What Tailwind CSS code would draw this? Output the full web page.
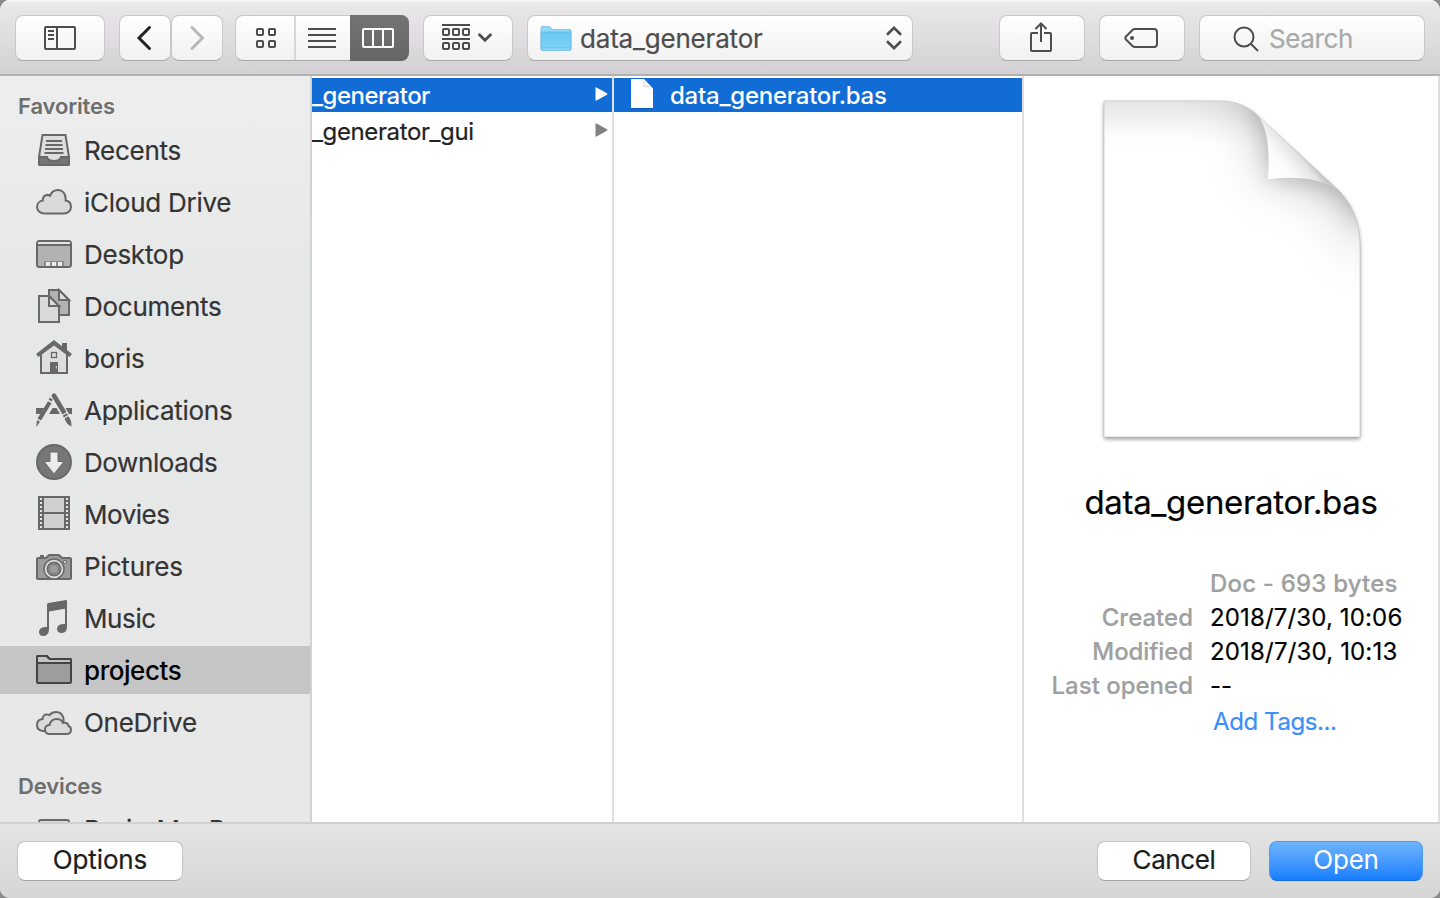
<!DOCTYPE html>
<html lang="en">
<head>
<meta charset="utf-8">
<title>Open</title>
<script src="https://cdn.jsdelivr.net/npm/@tailwindcss/browser@4"></script>
</head>
<body class="bg-[#8a8a8a] font-['Inter','Liberation_Sans',sans-serif]">
<div class="flex h-[898px] w-[1440px] flex-col overflow-hidden rounded-[10px] bg-white [-webkit-text-stroke:0.2px]">

  <!-- Toolbar -->
  <header class="flex h-[76px] shrink-0 items-start border-b-2 border-[#b3b0b3] bg-linear-to-b from-[#ebe9ec] to-[#d3d1d4] pl-[15px] pt-[15px] text-[#4d4d4d] shadow-[inset_0_2px_0_#f5f4f6]">
    <button class="flex h-[46px] w-[90px] items-center justify-center rounded-lg border border-[#c9c7c9] border-b-[#a9a7a9] bg-linear-to-b from-white to-[#f1f1f1]">
      <svg width="32" height="24" viewBox="0 0 32 24" fill="none" stroke="#4d4d4d" stroke-width="2"><rect x="1" y="1" width="30" height="22" rx="1"/><path d="M13 1v22M4 5h6M4 9h6M4 13h6"/></svg>
    </button>
    <button class="ml-[14px] flex h-[46px] w-[52px] items-center justify-center rounded-lg border border-[#c9c7c9] border-b-[#a9a7a9] bg-linear-to-b from-white to-[#f1f1f1]">
      <svg class="-translate-x-px" width="16" height="26" viewBox="0 0 16 26" fill="none" stroke="#222" stroke-width="3" stroke-linecap="round" stroke-linejoin="miter"><path d="M13.500 2.500L3 13l10.500 10.500"/></svg>
    </button>
    <button class="flex h-[46px] w-[52px] items-center justify-center rounded-lg border border-[#c9c7c9] border-b-[#a9a7a9] bg-linear-to-b from-white to-[#f1f1f1]">
      <svg width="16" height="26" viewBox="0 0 16 26" fill="none" stroke="#b8b8b8" stroke-width="3" stroke-linecap="round"><path d="M3 2.500L13.500 13L3 23.500"/></svg>
    </button>
    <div class="ml-3 flex h-[46px] w-[174px] rounded-lg border border-[#c9c7c9] border-b-[#a9a7a9] bg-linear-to-b from-white to-[#f1f1f1]">
      <div class="flex w-[60px] shrink-0 items-center justify-center border-r-2 border-[#d8d8d8]">
        <svg class="translate-x-px" width="20" height="20" viewBox="0 0 20 20" fill="none" stroke="#4d4d4d" stroke-width="2"><rect x="1" y="1" width="6" height="6" rx="1"/><rect x="13" y="1" width="6" height="6" rx="1"/><rect x="1" y="13" width="6" height="6" rx="1"/><rect x="13" y="13" width="6" height="6" rx="1"/></svg>
      </div>
      <div class="flex w-[54px] shrink-0 items-center justify-center">
        <svg class="-translate-x-px" width="28" height="20" viewBox="0 0 28 20" stroke="#4d4d4d" stroke-width="2"><path d="M0 1h28M0 7h28M0 13h28M0 19h28"/></svg>
      </div>
      <div class="-my-px flex w-[59px] shrink-0 items-center rounded-r-lg bg-linear-to-b from-[#737373] to-[#666] pl-3">
        <svg width="32" height="20" viewBox="0 0 32 20" fill="none" stroke="#fff" stroke-width="2"><rect x="1" y="1" width="30" height="18" rx="1"/><path d="M11 1v18M21 1v18"/></svg>
      </div>
    </div>
    <button class="ml-[14px] flex h-[46px] w-[90px] items-start gap-2 rounded-lg border border-[#c9c7c9] border-b-[#a9a7a9] bg-linear-to-b from-white to-[#f1f1f1] pl-[18px] pt-2">
      <svg width="28" height="26" viewBox="0 0 28 26" fill="none" stroke="#4d4d4d" stroke-width="2"><path d="M0 1h28M0 15h28"/><rect x="1" y="5" width="6" height="6" rx="1"/><rect x="11" y="5" width="6" height="6" rx="1"/><rect x="21" y="5" width="6" height="6" rx="1"/><rect x="1" y="19" width="6" height="6" rx="1"/><rect x="11" y="19" width="6" height="6" rx="1"/><rect x="21" y="19" width="6" height="6" rx="1"/></svg>
      <svg class="mt-[9px]" width="14" height="10" viewBox="0 0 14 10" fill="none" stroke="#4d4d4d" stroke-width="2.800" stroke-linecap="round"><path d="M1.500 1.800L7 7.300l5.500-5.500"/></svg>
    </button>
    <button class="ml-[14px] flex h-[46px] w-[386px] items-center rounded-lg border border-[#c9c7c9] border-b-[#a9a7a9] bg-linear-to-b from-white to-[#f1f1f1] pl-[12px] pr-[10px]">
      <svg class="translate-y-[0.500px]" width="32" height="26" viewBox="0 0 32 26">
        <defs><linearGradient id="fold" x2="0" y2="1"><stop offset="0" stop-color="#68c8f3"/><stop offset="1" stop-color="#82d3f7"/></linearGradient></defs>
        <path d="M1 24V2.200Q1 1 2.200 1h6.600q1 0 1.600.8l1.400 1.600q.5.600 1.400.6H30q1 0 1 1V24z" fill="#8fd8f8" stroke="#6cb6dc" stroke-width=".7"/>
        <path d="M1 6.500h30V24q0 1-1 1H2q-1 0-1-1z" fill="url(#fold)" stroke="#5fb2dc" stroke-width=".6"/><path d="M1.500 22h29" stroke="#6bc0ea" stroke-width=".8"/>
      </svg>
      <span class="ml-2 pt-px text-[26px] tracking-[-0.007em]">data_generator</span>
      <svg class="ml-auto" width="16" height="24" viewBox="0 0 16 24" fill="none" stroke="#4d4d4d" stroke-width="2.600" stroke-linecap="round"><path d="M1.800 8L8 1.800L14.200 8M1.800 16L8 22.200L14.200 16"/></svg>
    </button>
    <button class="ml-[86px] flex h-[46px] w-[86px] justify-center rounded-lg border border-[#c9c7c9] border-b-[#a9a7a9] bg-linear-to-b from-white to-[#f1f1f1] pt-[6px]">
      <svg class="-translate-x-px" width="24" height="30" viewBox="0 0 24 30" fill="none" stroke="#4d4d4d" stroke-width="2"><path d="M9 11H3q-1 0-1 1v16q0 1 1 1h18q1 0 1-1V12q0-1-1-1h-6M12 20V2M6.500 7L12 1.500L17.500 7"/></svg>
    </button>
    <button class="ml-[14px] flex h-[46px] w-[86px] items-center justify-center rounded-lg border border-[#c9c7c9] border-b-[#a9a7a9] bg-linear-to-b from-white to-[#f1f1f1]">
      <svg class="-translate-x-px" width="34" height="20" viewBox="0 0 34 20" fill="none" stroke="#4d4d4d" stroke-width="2"><path d="M11 1h19q3 0 3 3v12q0 3-3 3H11q-1.500 0-2.500-1L2 11.500q-1.300-1.500 0-3L8.500 2q1-1 2.500-1z"/><circle cx="8" cy="10" r="2" fill="#4d4d4d" stroke="none"/></svg>
    </button>
    <div class="ml-[14px] flex h-[46px] w-[226px] items-center rounded-lg border border-[#c9c7c9] border-b-[#a9a7a9] bg-linear-to-b from-white to-[#f1f1f1] pl-[33px]">
      <svg class="translate-y-px" width="26" height="26" viewBox="0 0 26 26" fill="none" stroke="#4d4d4d" stroke-width="2"><circle cx="11" cy="11" r="9.500"/><path d="M17.800 17.800L25 25"/></svg>
      <span class="ml-[10px] pt-px text-[26px] tracking-[-0.015em] text-[#a9a9a9]">Search</span>
    </div>
  </header>

  <main class="flex min-h-0 flex-1">
    <!-- Sidebar -->
    <aside class="w-[312px] shrink-0 overflow-hidden border-r-2 border-[#d2d2d2] bg-linear-to-b from-[#eeeeee] via-[#e6e7e7] via-30% to-[#e8e8e8] text-[26px] text-[#343434]">
      <h2 class="flex h-[50px] items-center pl-[18px] pt-[10px] text-[22px] font-semibold tracking-[-0.006em] text-[#6e6e6e] [-webkit-text-stroke:0]">Favorites</h2>
      <ul class="flex flex-col gap-1 [&>li]:flex [&>li]:h-12 [&>li]:items-center [&>li]:gap-3 [&>li]:pl-9 [&>li]:tracking-[-0.01em] [&_span]:pt-px">
        <li><svg width="36" height="36" viewBox="0 0 36 36" stroke="#686868" stroke-width="2"><path d="M6.500 3h23L33 25v7q0 1-1 1H4q-1 0-1-1v-7z" fill="#dedede"/><path d="M3 25h8q1 4 7 4t7-4h8v7q0 1-1 1H4q-1 0-1-1z" fill="#747474"/><path d="M10 9h16M9.500 13h17M9 17h18M8.500 21h19" fill="none"/></svg><span>Recents</span></li>
        <li><svg width="36" height="36" viewBox="0 0 36 36" fill="#dadada" stroke="#686868" stroke-width="2"><path d="M8.500 29.500C4 29.500 1 26.500 1 23C1 19.500 3.600 16.800 6.800 16.500C6.500 12 10.500 9.500 14 11.800C15.500 8 18.500 6 22 6C26.500 6 29.700 9.500 29.600 14.500V16.500C32.700 17 35 19.500 35 23C35 26.500 32 29.500 28 29.500z"/></svg><span>iCloud Drive</span></li>
        <li><svg width="36" height="36" viewBox="0 0 36 36" stroke="#686868" stroke-width="2"><rect x="1" y="5" width="34" height="26" rx="2.500" fill="#b2b2b2"/><path d="M2 6h32v2.500H2z" fill="#e6e6e6" stroke="none"/><path d="M1 9h34" fill="none"/><path d="M8 30v-5h20v5z" fill="#8a8a8a" stroke="none"/><path d="M10 26h4v4h-4zM16 26h4v4h-4zM22 26h4v4h-4z" fill="#ececec" stroke="none"/></svg><span>Desktop</span></li>
        <li><svg width="36" height="36" viewBox="0 0 36 36" stroke="#686868" stroke-width="2"><path d="M13 2h10l10 10v15H13z" fill="#b2b2b2"/><path d="M23 2v10h10z" fill="#dedede"/><path d="M3 8h10l10 10v16H3z" fill="#dadada"/><path d="M13 8v10h10z" fill="#dedede"/></svg><span>Documents</span></li>
        <li><svg width="36" height="36" viewBox="0 0 36 36" stroke="#686868" stroke-width="2"><path d="M5 13L18 3l13 10v20H5z" fill="#dedede"/><path d="M26 3h5v10l-5-4z" fill="#686868" stroke="none"/><path d="M0 14L18 0l18 14l-2.500 3L18 5.500L2.500 17z" fill="#686868" stroke="none"/><rect x="15.500" y="12.500" width="5" height="5" fill="none" stroke-width="1.300"/><path d="M14 22h8v11h-8z" fill="#686868" stroke="none"/><path d="M20.300 26v2.500" stroke="#dedede" stroke-width="1"/></svg><span>boris</span></li>
        <li><svg width="36" height="36" viewBox="0 0 36 36" fill="#686868"><path d="M0 16h8l-3.500 6H0zM16.500 16h4l3.500 6H13zM29.500 16H36v6h-3z"/><path d="M16 2.500q2-2.500 4 0L30.500 20l-4 2.500L15.500 4z"/><path d="M26.800 23.600l4.200-2.400l1 1.800l-4.200 2.400zM28.500 26.500l4-2.200q3 3.500 3 10.200q-5-2-7-8z"/><path d="M12.600 7.600l1.200-1.800l3 1.700l-1.100 2z"/><path d="M12 9.300l3.500 2L5 28.500l-3.500-2zM1 28l3 1.800L.3 35z"/></svg><span>Applications</span></li>
        <li><svg width="36" height="36" viewBox="0 0 36 36"><circle cx="18" cy="18" r="17" fill="#767676" stroke="#686868" stroke-width="2"/><path d="M14 8h8v9.500h6L18 30L8 17.500h6z" fill="#ececec" stroke="#686868" stroke-width="1"/></svg><span class="tracking-[-0.015em]">Downloads</span></li>
        <li><svg width="36" height="36" viewBox="0 0 36 36"><path d="M2 0h32v34H2z" fill="#686868"/><path d="M8 2h20v14H8zM8 18h20v14H8z" fill="#cfcfcf"/><path d="M5 2v32M31 2v32" stroke="#e4e4e4" stroke-width="2" stroke-dasharray="2 2"/></svg><span class="tracking-[-0.018em]">Movies</span></li>
        <li><svg width="36" height="36" viewBox="0 0 36 36" stroke="#686868" stroke-width="2"><path d="M1 11q0-1 1-1h8l2-2q1-1 2-1h8q1 0 2 1l2 2h8q1 0 1 1v19q0 1-1 1H2q-1 0-1-1z" fill="#9b9b9b"/><path d="M4 8h4" /><circle cx="18" cy="21" r="10" fill="#dedede" stroke-width="1.500"/><circle cx="18" cy="21" r="6.500" fill="#dedede"/><circle cx="18" cy="21" r="4.800" fill="#9b9b9b" stroke-width="1"/><circle cx="29" cy="14" r="1.600" fill="#dedede" stroke-width="1"/></svg><span class="tracking-[-0.005em]">Pictures</span></li>
        <li><svg width="36" height="36" viewBox="0 0 36 36" fill="#686868"><path d="M11 4.500Q11 3.200 12.300 3L30 0q1 0 1 1v26q0 5.500-5 6q-5 0-5-4q0-4.500 6-5h2V8.800L13 11.500V29q0 6.500-5.500 7Q3 36 3 32q0-4.500 6-5h2z"/></svg><span class="tracking-[-0.015em]">Music</span></li>
        <li class="bg-[#c5c5c5] font-medium text-black [-webkit-text-stroke:0]"><svg width="36" height="36" viewBox="0 0 36 36" stroke="#444" stroke-width="2"><path d="M1 30V5q0-1 1-1h8q1 0 1.500.8L13 6.200q.5.800 1.500.8H34q1 0 1 1v22q0 1-1 1H2q-1 0-1-1z" fill="#9d9d9d"/><path d="M2 5h8l3 3h21v3H2z" fill="#c2c2c2" stroke="none"/><path d="M1 11q0 0 1 0h32h1" fill="none"/><path d="M1 30V5q0-1 1-1h8q1 0 1.500.8L13 6.200q.5.800 1.500.8H34q1 0 1 1" fill="none"/></svg><span class="tracking-[-0.017em]">projects</span></li>
        <li><svg width="36" height="36" viewBox="0 0 36 36" fill="#dadada" stroke="#686868" stroke-width="2"><path d="M9 27H7Q1 26.500 1 21t5.500-6Q7 10 11.500 10.500q1 0 2 .5Q16 8 20 8q6 0 7.500 6.500V25z"/><path d="M13 30q-4-.5-4-4.500t4.500-4.500Q15 15 20.500 15q5 0 6.500 4q5-1 5.500 3q2.500 1 2.500 4q0 3.500-4 4z"/></svg><span>OneDrive</span></li>
      </ul>
      <h2 class="flex h-[60px] items-center pl-[18px] pt-5 text-[22px] font-semibold tracking-[-0.006em] text-[#6e6e6e] [-webkit-text-stroke:0]">Devices</h2>
      <div class="flex h-12 items-center gap-3 pl-9 tracking-[-0.01em] [word-spacing:4px]"><svg width="36" height="36" viewBox="0 0 36 36" fill="#dadada" stroke="#686868" stroke-width="2"><rect x="3" y="8" width="30" height="20" rx="2"/></svg><span class="pb-px">Boris MacB...</span></div>
    </aside>

    <!-- Browser columns -->
    <section class="w-[302px] shrink-0 overflow-hidden border-r-2 border-[#dfdfdf] pt-[2px] text-[24px] text-[#222]">
      <div class="flex h-[34px] items-center justify-between bg-[#116cd6] pr-1 font-medium text-white [-webkit-text-stroke:0]"><span class="pt-[2px] tracking-[-0.022em]">_generator</span><svg class="-translate-y-px" width="13" height="14" viewBox="0 0 13 14" fill="#fff"><path d="M.5 1Q.5 0 1.500.5L12 6.300q1 .7 0 1.400L1.500 13.500q-1 .5-1-.5z"/></svg></div>
      <div class="mt-[2px] flex h-[34px] items-center justify-between pr-1"><span class="pt-[2px] tracking-[-0.016em]">_generator_gui</span><svg class="-translate-y-px" width="13" height="14" viewBox="0 0 13 14" fill="#808080"><path d="M.5 1Q.5 0 1.500.5L12 6.300q1 .7 0 1.400L1.500 13.500q-1 .5-1-.5z"/></svg></div>
    </section>
    <section class="w-[410px] shrink-0 border-r-2 border-[#dfdfdf] pt-[2px] text-[24px]">
      <div class="flex h-[34px] items-center bg-[#116cd6] pl-[16px] font-medium text-white [-webkit-text-stroke:0]">
        <svg class="-translate-y-px" width="24" height="32" viewBox="0 0 24 32"><path d="M1 1h13l9 9.500V30H1z" fill="#0c4f9e" opacity=".6" transform="translate(0 1)"/><path d="M1 1h13l9 9.500V30H1z" fill="#fff"/><path d="M14 3.500v5h5.500" fill="#f5f5f5" stroke="#d5d5d5"/></svg>
        <span class="ml-4 pt-[2px] tracking-[-0.01em]">data_generator.bas</span>
      </div>
    </section>

    <!-- Preview -->
    <section class="flex w-[416px] shrink-0 flex-col border-r-2 border-[#dfdfdf] text-black">
      <svg class="ml-[70px] mt-[14px]" width="280" height="360" viewBox="0 0 280 360">
        <defs>
          <clipPath id="sheet"><path d="M10 11H124C145 11 157 18 167 29L242 98C258 113 266 132 266 158V347H10z"/></clipPath>
          <linearGradient id="top" x2="0" y2="1"><stop offset="0" stop-color="#e4e4e4"/><stop offset=".5" stop-color="#f7f7f7"/><stop offset="1" stop-color="#fff" stop-opacity="0"/></linearGradient>
          <linearGradient id="curl" gradientUnits="userSpaceOnUse" x1="177" y1="84" x2="206" y2="60"><stop offset="0" stop-color="#fff"/><stop offset=".45" stop-color="#fafafa"/><stop offset=".85" stop-color="#e4e4e4"/><stop offset="1" stop-color="#c9c9c9"/></linearGradient>
          <filter id="b1" x="-50%" y="-50%" width="200%" height="200%"><feGaussianBlur stdDeviation="28"/></filter>
          <filter id="b3" x="-50%" y="-50%" width="200%" height="200%"><feGaussianBlur stdDeviation="11"/></filter>
          <filter id="b2" x="-10%" y="-10%" width="120%" height="120%"><feGaussianBlur stdDeviation="2.200"/></filter>
        </defs>
        <path d="M10 11H124C145 11 157 18 167 29L242 98C258 113 266 132 266 158V347H10z" transform="translate(0 2)" fill="#000" opacity=".42" filter="url(#b2)"/>
        <g clip-path="url(#sheet)">
          <path d="M0 0h280v360H0z" fill="#fff"/>
          <path d="M10 11h170v52H10z" fill="url(#top)"/>
          <path d="M130 -10L166 28Q176 45 174 89Q220 84 242 98L275 170L300 60L200 -30z" fill="#777" opacity=".44" filter="url(#b1)"/>
          <path d="M160 10L167 29Q176 45 176 88Q220 84 250 108L270 140L300 60L200 -30z" fill="#777" opacity=".46" filter="url(#b3)"/>
        </g>
        <path d="M10 11H124C145 11 157 18 167 29L242 98C258 113 266 132 266 158V347H10z" fill="none" stroke="#bdbdbd" stroke-width=".6"/>
        <path d="M165 27C173 40 176 55 174 89C204 86 229 88 247 103z" fill="url(#curl)"/>
      </svg>
      <h1 class="mt-[31px] w-[414px] text-center text-[33px] leading-[42px] tracking-[-0.01em]">data_generator.bas</h1>
      <dl class="mt-[44px] grid grid-cols-[169px_1fr] gap-x-[17px] text-[24px] leading-[34px] [&>dt]:text-right [&>dt]:font-medium [&>dt]:text-[#a0a0a0] [&>dd]:whitespace-nowrap">
        <dt></dt><dd class="font-medium tracking-[0.008em] text-[#a0a0a0]">Doc - 693 bytes</dd>
        <dt>Created</dt><dd class="tracking-[0.006em]">2018/7/30, 10:06</dd>
        <dt class="tracking-[-0.004em]">Modified</dt><dd class="tracking-[0.007em]">2018/7/30, 10:13</dd>
        <dt>Last opened</dt><dd>--</dd>
        <dt></dt><dd class="pl-[3px] pt-[2px] tracking-[-0.017em] text-[#3b8ffb]">Add Tags...</dd>
      </dl>
    </section>
  </main>

  <!-- Footer -->
  <footer class="flex h-[76px] shrink-0 items-start border-t-2 border-[#d0d0d0] bg-linear-to-b from-[#e4e4e4] to-[#d6d6d6] px-[17px] pt-[17px] text-[26px] tracking-[-0.01em] text-[#1c1c1c]">
    <button class="h-[40px] w-[166px] rounded-lg border border-[#c3c3c3] border-b-[#a4a4a4] bg-white pb-[2px] leading-[36px] tracking-[-0.005em]">Options</button>
    <button class="ml-auto h-[40px] w-[154px] rounded-lg border border-[#c3c3c3] border-b-[#a4a4a4] bg-white pb-[2px] leading-[36px] tracking-[-0.015em]">Cancel</button>
    <button class="ml-[18px] h-[40px] w-[154px] rounded-lg border border-[#4a9cf0] border-b-[#1367f0] bg-linear-to-b from-[#6db3fa] to-[#147efe] pb-[2px] leading-[36px] text-white [-webkit-text-stroke:0]">Open</button>
  </footer>
</div>
</body>
</html>
